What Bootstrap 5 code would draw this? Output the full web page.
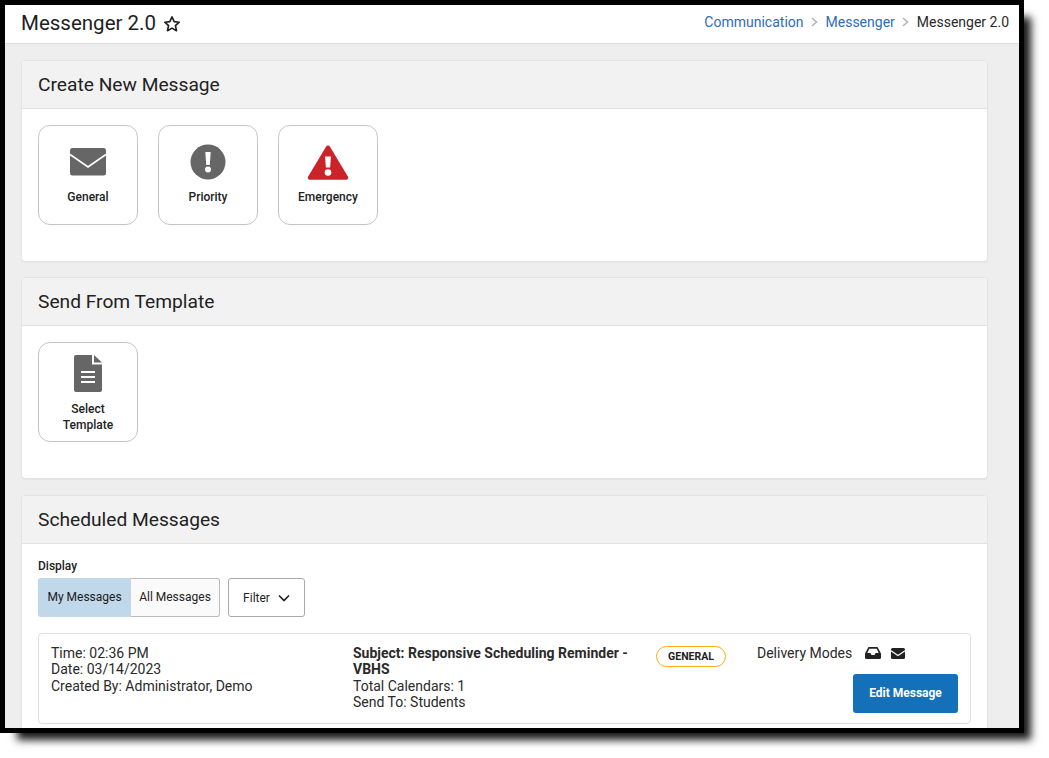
<!DOCTYPE html>
<html lang="en">
<head>
<meta charset="utf-8">
<title>Messenger 2.0</title>
<link href="https://cdn.jsdelivr.net/npm/bootstrap@5.3.0/dist/css/bootstrap.min.css" rel="stylesheet">
<style>
html,body{height:100%;background:#fff;overflow:hidden}
body{font-family:Roboto,"Liberation Sans",sans-serif;font-size:14px;color:#2a2a2a;line-height:16.5px}
.shot-frame{width:1024px;height:733px;border:5px solid #000;background:#eee;overflow:hidden;box-shadow:12px 12px 8px -5px rgba(0,0,0,.9)}
.page-top{height:39px;background:#fff;border-bottom:1px solid #dcdcdc;padding:0 10px 0 16px}
.page-title{font-size:20.5px;line-height:36px;font-weight:400;margin:0;color:#1e1e1e}
.star-ic{width:18px;height:18px;margin-left:7px;margin-top:1px}
.crumbs{font-size:14px;line-height:34px}
.crumbs a{color:#2f6db5;text-decoration:none}
.crumbs .sep{width:7px;height:10px;margin:0 7.5px}
.pane-wrap{padding:16px 31px 0 16px}
.pane{border:1px solid #e4e4e4;border-radius:4px;background:#fff;margin-bottom:16px;box-shadow:0 1px 1px rgba(0,0,0,.04)}
.pane-first{margin-bottom:15.2px}
.pane-head{height:48px;background:#f2f2f2;border-bottom:1px solid #e2e2e2;padding:0 16px;font-size:19.2px;line-height:47px;color:#222;border-radius:4px 4px 0 0}
.pane-body{padding:16px 16px 36px;height:152px}
.tile-row{gap:20px}
.pane-last{height:auto;padding:15px 16px 16px}
.tile{width:100px;height:100px;border:1px solid #c4c4c4;border-radius:12px;background:#fff;font-size:12px;font-weight:500;line-height:16px;text-align:center;color:#222;padding-top:18px}
.tile-tall{padding-top:12px}
.tile-ic{height:36px}
.tile-tall .tile-ic{height:37px}
.tile-lab{margin-top:9px}
.disp-label{font-size:12px;font-weight:500;line-height:14px;margin-bottom:5px;color:#222}
.seg{height:39px;font-size:12px}
.seg span{display:flex;align-items:center;justify-content:center}
.seg-on{width:93px;background:#c1d7ea;color:#1a1a1a;border-radius:3px 0 0 3px}
.seg-off{width:89px;background:#fafafa;color:#222;border:1px solid #bbb;border-left:0;border-radius:0 3px 3px 0}
.filter-btn{height:39px;width:77px;border:1px solid #aaa;border-radius:3px;background:#fff;font-size:12px;color:#222;margin-left:8px}
.filter-txt{padding-top:2px}
.msg-card{height:91px;border:1px solid #e0e0e0;border-radius:4px;padding:10.7px 12px;margin-top:16px}
.msg-a{width:302px}
.msg-b{width:288px}
.msg-c{width:116px}
.pill-gen{display:block;width:70px;height:21px;border:1px solid #f2ae14;border-radius:11px;font-size:10.5px;font-weight:700;line-height:19px;text-align:center;color:#222;margin:1.3px 0 0 15px}
.modes{width:201px}
.mode-a{width:16px;height:12px;margin-left:12.6px}
.mode-b{width:14px;height:11px;margin-left:10px}
.edit-btn{width:105px;height:39px;background:#1470b8;color:#fff;border-radius:3px;font-size:12px;font-weight:700;line-height:39px;text-align:center;margin-top:12.3px}
</style>
</head>
<body>
<div class="shot-frame d-flex flex-column">
  <div class="page-top d-flex justify-content-between align-items-start flex-shrink-0">
    <div class="d-flex align-items-center">
      <h1 class="page-title">Messenger 2.0</h1>
      <svg class="star-ic" viewBox="0 0 24 24" fill="none" stroke="#1e1e1e" stroke-width="2.2" stroke-linejoin="round"><path d="M12 2.600l2.900 6.200 6.700.8-5 4.600 1.400 6.700-6-3.400-6 3.400 1.400-6.700-5-4.600 6.700-.8z"/></svg>
    </div>
    <div class="crumbs d-flex align-items-center">
      <a href="#">Communication</a>
      <svg class="sep" viewBox="0 0 7 10" fill="none" stroke="#b5b5b5" stroke-width="1.6"><path d="M1 1l4.500 4L1 9"/></svg>
      <a href="#">Messenger</a>
      <svg class="sep" viewBox="0 0 7 10" fill="none" stroke="#b5b5b5" stroke-width="1.6"><path d="M1 1l4.500 4L1 9"/></svg>
      <span>Messenger 2.0</span>
    </div>
  </div>
  <div class="pane-wrap">
    <div class="pane pane-first">
      <div class="pane-head">Create New Message</div>
      <div class="pane-body d-flex tile-row">
        <div class="tile d-flex flex-column align-items-center">
          <div class="tile-ic d-flex align-items-center"><svg width="36" height="28" viewBox="0 0 36 28"><rect width="36" height="27.500" rx="2.500" fill="#666"/><path d="M0 6.500L18 19 36 6.500" fill="none" stroke="#fff" stroke-width="1.800"/></svg></div>
          <div class="tile-lab">General</div>
        </div>
        <div class="tile d-flex flex-column align-items-center">
          <div class="tile-ic d-flex align-items-center"><svg width="36" height="36" viewBox="0 0 36 36"><circle cx="18" cy="18" r="17.500" fill="#666"/><path d="M15.300 8h5.400l-.9 13h-3.600z" fill="#fff"/><circle cx="18" cy="25.500" r="3" fill="#fff"/></svg></div>
          <div class="tile-lab">Priority</div>
        </div>
        <div class="tile d-flex flex-column align-items-center">
          <div class="tile-ic d-flex align-items-center"><svg width="42" height="36" viewBox="0 0 42 36"><path d="M21 1.500a2.400 2.400 0 0 1 2 1.200l18 30a2 2 0 0 1-1.800 3H2.800a2 2 0 0 1-1.800-3l18-30a2.400 2.400 0 0 1 2-1.200z" fill="#cc2229"/><path d="M18 12.500h6l-.9 11h-4.200z" fill="#fff"/><circle cx="21" cy="28.500" r="3.300" fill="#fff"/></svg></div>
          <div class="tile-lab">Emergency</div>
        </div>
      </div>
    </div>
    <div class="pane">
      <div class="pane-head">Send From Template</div>
      <div class="pane-body d-flex">
        <div class="tile tile-tall d-flex flex-column align-items-center">
          <div class="tile-ic d-flex align-items-center"><svg width="28" height="37" viewBox="0 0 28 37"><path d="M2 0h16v9.500h10V35a2 2 0 0 1-2 2H2a2 2 0 0 1-2-2V2a2 2 0 0 1 2-2z" fill="#666"/><path d="M20 0l8 7.500h-8z" fill="#666"/><path d="M7 17h14M7 22h14M7 27h14" stroke="#fff" stroke-width="2"/></svg></div>
          <div class="tile-lab">Select<br>Template</div>
        </div>
      </div>
    </div>
    <div class="pane">
      <div class="pane-head">Scheduled Messages</div>
      <div class="pane-last">
        <div class="disp-label">Display</div>
        <div class="d-flex">
          <div class="seg d-flex"><span class="seg-on">My Messages</span><span class="seg-off">All Messages</span></div>
          <div class="filter-btn d-flex align-items-center justify-content-center gap-2"><span class="filter-txt">Filter</span> <svg width="12" height="8" viewBox="0 0 12 8" fill="none" stroke="#222" stroke-width="1.700"><path d="M1 1.500l5 5 5-5"/></svg></div>
        </div>
        <div class="msg-card d-flex">
          <div class="msg-a">Time: 02:36 PM<br>Date: 03/14/2023<br>Created By: Administrator, Demo</div>
          <div class="msg-b"><strong class="fw-bold">Subject: Responsive Scheduling Reminder - VBHS</strong><br>Total Calendars: 1<br>Send To: Students</div>
          <div class="msg-c"><span class="pill-gen">GENERAL</span></div>
          <div class="modes">
            <div class="d-flex align-items-center">Delivery Modes
              <svg class="mode-a" viewBox="0 0 16 12"><path d="M3.500 0h9L16 6.500V10.500a1.500 1.500 0 0 1-1.500 1.500h-13A1.500 1.500 0 0 1 0 10.500V6.500z" fill="#222"/><path d="M4.300 1.800h7.400l2 4.200h-3.200l-1 2h-3l-1-2H2.300z" fill="#fff"/></svg>
              <svg class="mode-b" viewBox="0 0 14 11"><rect width="14" height="11" rx="1.500" fill="#222"/><path d="M0 2.800L7 7.500l7-4.700" fill="none" stroke="#fff" stroke-width="1.100"/></svg>
            </div>
            <div class="d-flex justify-content-end"><div class="edit-btn">Edit Message</div></div>
          </div>
        </div>
      </div>
    </div>
  </div>
</div>
<script src="https://cdn.jsdelivr.net/npm/bootstrap@5.3.0/dist/js/bootstrap.bundle.min.js"></script>
</body>
</html>
